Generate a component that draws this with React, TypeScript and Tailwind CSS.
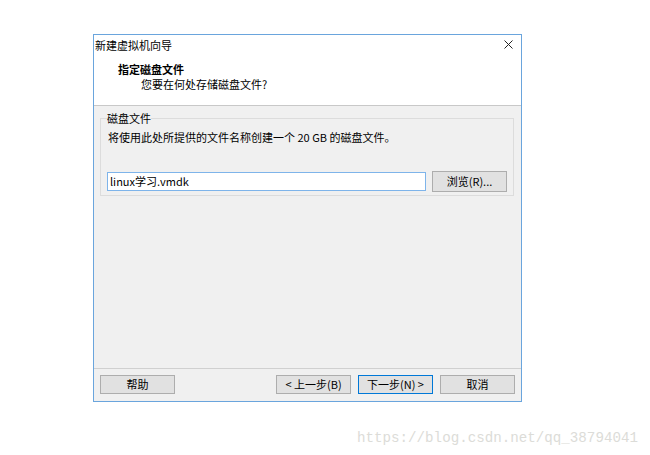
import React from "react";

const cjk = { fontFamily: '"Noto Sans CJK SC", "Noto Sans", sans-serif' };

function Btn({ children, primary }: { children: React.ReactNode; primary?: boolean }) {
  return (
    <div
      className={
        "w-[75px] h-[19px] flex items-center justify-center text-[11px] leading-[15px] text-black bg-[#e1e1e1] border " +
        (primary ? "border-[#0078d7]" : "border-[#adadad]")
      }
    >
      {children}
    </div>
  );
}

export default function App() {
  return (
    <div className="w-[650px] h-[455px] bg-white pt-[34px] overflow-hidden" style={cjk}>
      <div className="ml-[93px] w-[429px] h-[368px] border border-[#6aa5dd] flex flex-col text-black">
        {/* header */}
        <div className="h-[70px] bg-white flex flex-col">
          <div className="h-[21px] flex items-center justify-between pl-[1px] pr-[8px]">
            <span className="text-[11px] leading-[15px]">新建虚拟机向导</span>
            <svg width="9" height="9" viewBox="0 0 9 9" className="mb-[2px]">
              <path d="M0.5 0.5 L8.5 8.5 M8.5 0.5 L0.5 8.5" stroke="#222" strokeWidth="1" fill="none" />
            </svg>
          </div>
          <div className="mt-[6px] pl-[24px] text-[11px] leading-[15px] font-bold">指定磁盘文件</div>
          <div className="pl-[47px] text-[11px] leading-[15px]">您要在何处存储磁盘文件?</div>
        </div>
        <div className="h-px bg-[#c8c8c8]" />
        {/* body */}
        <div className="flex-1 bg-[#f0f0f0] pl-[6px] pr-[8px] pt-[5px]">
          <fieldset className="border border-[#dcdcdc] px-[6px] pb-[3px]">
            <legend className="text-[11px] leading-[15px]">磁盘文件</legend>
            <div className="mt-[4px] pl-[1px] text-[11px] leading-[15px]">
              将使用此处所提供的文件名称创建一个 20 GB 的磁盘文件。
            </div>
            <div className="mt-[26px] flex items-center gap-[6px] h-[21px]">
              <div className="w-[319px] h-[19px] bg-white border border-[#7eb4ea] flex items-center pl-[2px] text-[11px] leading-[15px]">
                linux学习.vmdk
              </div>
              <div className="w-[75px] h-[21px] flex items-center justify-center bg-[#e1e1e1] border border-[#adadad] text-[11px] leading-[15px]">
                浏览(R)...
              </div>
            </div>
          </fieldset>
        </div>
        <div className="h-px bg-[#d0d0d0]" />
        {/* footer */}
        <div className="h-[32px] bg-[#f0f0f0] flex items-start pt-[6px] px-[6px]">
          <Btn>帮助</Btn>
          <div className="flex-1" />
          <div className="flex gap-[7px]">
            <Btn>&lt; 上一步(B)</Btn>
            <Btn primary>下一步(N) &gt;</Btn>
            <Btn>取消</Btn>
          </div>
        </div>
      </div>
      <div
        className="mt-[28px] pl-[357px] text-[14.2px] leading-[16px] text-[#dcdcd8] whitespace-nowrap"
        style={{ fontFamily: '"Liberation Mono", monospace' }}
      >
        https://blog.csdn.net/qq_38794041
      </div>
    </div>
  );
}
